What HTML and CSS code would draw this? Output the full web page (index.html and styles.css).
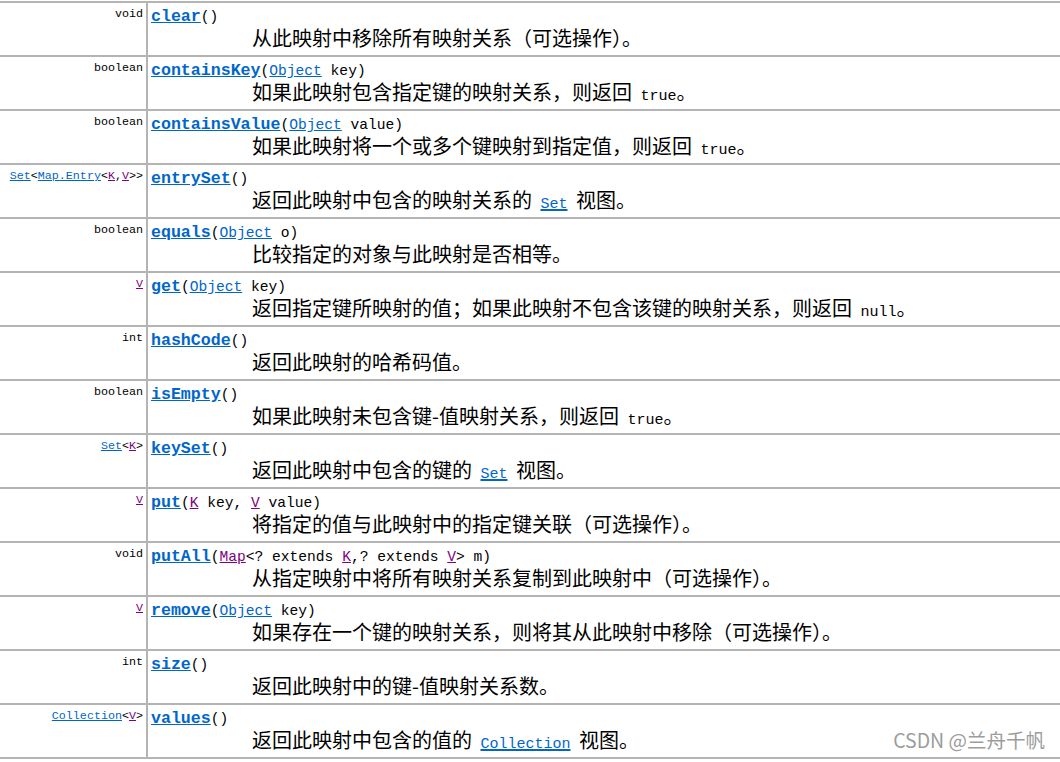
FILE: index.html
```html
<!DOCTYPE html>
<html lang="zh-CN">
<head>
  <meta charset="UTF-8">
  <title>Map 方法摘要</title>
  <link rel="stylesheet" href="styles.css">
</head>
<body>
  <div class="summary">
    <div class="row">
      <div class="type">void</div>
      <div class="member">
        <div class="sig"><a class="name" href="#">clear</a>()</div>
        <div class="desc">从此映射中移除所有映射关系（可选操作）。</div>
      </div>
    </div>
    <div class="row">
      <div class="type">boolean</div>
      <div class="member">
        <div class="sig"><a class="name" href="#">containsKey</a>(<a href="#">Object</a> key)</div>
        <div class="desc">如果此映射包含指定键的映射关系，则返回 <code>true</code>。</div>
      </div>
    </div>
    <div class="row">
      <div class="type">boolean</div>
      <div class="member">
        <div class="sig"><a class="name" href="#">containsValue</a>(<a href="#">Object</a> value)</div>
        <div class="desc">如果此映射将一个或多个键映射到指定值，则返回 <code>true</code>。</div>
      </div>
    </div>
    <div class="row">
      <div class="type"><a href="#">Set</a>&lt;<a href="#">Map.Entry</a>&lt;<a class="param" href="#">K</a>,<a class="param" href="#">V</a>&gt;&gt;</div>
      <div class="member">
        <div class="sig"><a class="name" href="#">entrySet</a>()</div>
        <div class="desc">返回此映射中包含的映射关系的 <a href="#"><code>Set</code></a> 视图。</div>
      </div>
    </div>
    <div class="row">
      <div class="type">boolean</div>
      <div class="member">
        <div class="sig"><a class="name" href="#">equals</a>(<a href="#">Object</a> o)</div>
        <div class="desc">比较指定的对象与此映射是否相等。</div>
      </div>
    </div>
    <div class="row">
      <div class="type"><a class="param" href="#">V</a></div>
      <div class="member">
        <div class="sig"><a class="name" href="#">get</a>(<a href="#">Object</a> key)</div>
        <div class="desc">返回指定键所映射的值；如果此映射不包含该键的映射关系，则返回 <code>null</code>。</div>
      </div>
    </div>
    <div class="row">
      <div class="type">int</div>
      <div class="member">
        <div class="sig"><a class="name" href="#">hashCode</a>()</div>
        <div class="desc">返回此映射的哈希码值。</div>
      </div>
    </div>
    <div class="row">
      <div class="type">boolean</div>
      <div class="member">
        <div class="sig"><a class="name" href="#">isEmpty</a>()</div>
        <div class="desc">如果此映射未包含键-值映射关系，则返回 <code>true</code>。</div>
      </div>
    </div>
    <div class="row">
      <div class="type"><a href="#">Set</a>&lt;<a class="param" href="#">K</a>&gt;</div>
      <div class="member">
        <div class="sig"><a class="name" href="#">keySet</a>()</div>
        <div class="desc">返回此映射中包含的键的 <a href="#"><code>Set</code></a> 视图。</div>
      </div>
    </div>
    <div class="row">
      <div class="type"><a class="param" href="#">V</a></div>
      <div class="member">
        <div class="sig"><a class="name" href="#">put</a>(<a class="param" href="#">K</a> key, <a class="param" href="#">V</a> value)</div>
        <div class="desc">将指定的值与此映射中的指定键关联（可选操作）。</div>
      </div>
    </div>
    <div class="row">
      <div class="type">void</div>
      <div class="member">
        <div class="sig"><a class="name" href="#">putAll</a>(<a class="param" href="#">Map</a>&lt;? extends <a class="param" href="#">K</a>,? extends <a class="param" href="#">V</a>&gt; m)</div>
        <div class="desc">从指定映射中将所有映射关系复制到此映射中（可选操作）。</div>
      </div>
    </div>
    <div class="row">
      <div class="type"><a class="param" href="#">V</a></div>
      <div class="member">
        <div class="sig"><a class="name" href="#">remove</a>(<a href="#">Object</a> key)</div>
        <div class="desc">如果存在一个键的映射关系，则将其从此映射中移除（可选操作）。</div>
      </div>
    </div>
    <div class="row">
      <div class="type">int</div>
      <div class="member">
        <div class="sig"><a class="name" href="#">size</a>()</div>
        <div class="desc">返回此映射中的键-值映射关系数。</div>
      </div>
    </div>
    <div class="row">
      <div class="type"><a href="#">Collection</a>&lt;<a class="param" href="#">V</a>&gt;</div>
      <div class="member">
        <div class="sig"><a class="name" href="#">values</a>()</div>
        <div class="desc">返回此映射中包含的值的 <a href="#"><code>Collection</code></a> 视图。</div>
      </div>
    </div>
  </div>
  <div class="watermark">CSDN @兰舟千帆</div>
</body>
</html>
```

FILE: styles.css
```css
body{
  margin: 0;
  background-color: #fff;
  color: #000;
  position: relative;
  height: 762px;
  overflow: hidden;
}
.summary{
  margin-top: 1px;
  border-top: 2px solid #b4b4b4;
}
.row{
  display: grid;
  grid-template-columns: 148px 1fr;
  height: 52px;
  border-bottom: 2px solid #b4b4b4;
}
.type{
  border-right: 2px solid #b4b4b4;
  text-align: right;
  padding: 4px 3px 0 0;
  font-family: "Liberation Mono", monospace;
  font-size: 11.7px;
  line-height: 14px;
  white-space: nowrap;
}
.member{
  padding: 5px 0 0 3px;
}
.sig{
  font-family: "Liberation Mono", monospace;
  font-size: 14.6px;
  line-height: 18px;
  white-space: nowrap;
}
a{
  color: #0066cc;
  text-decoration: underline;
}
a.param{
  color: #800080;
}
.name{
  font-weight: bold;
  font-size: 16.6px;
}
.desc{
  padding-left: 101px;
  font-family: "Noto Sans CJK SC", sans-serif;
  font-size: 20px;
  line-height: 23px;
  word-spacing: 4px;
  white-space: nowrap;
}
.desc code{
  font-family: "Liberation Mono", monospace;
  font-size: 15px;
  word-spacing: 0;
}
.watermark{
  position: absolute;
  right: 15px;
  bottom: 8px;
  font-family: "Noto Sans CJK SC", sans-serif;
  font-size: 19.5px;
  color: #9c9c9c;
}
```
